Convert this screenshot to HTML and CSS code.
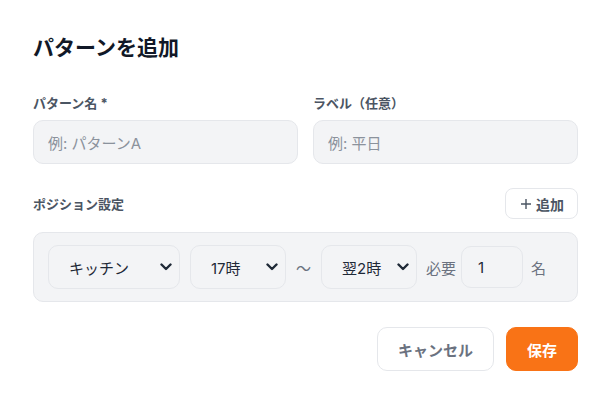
FILE: index.html
```html
<!DOCTYPE html>
<html lang="ja">
<head>
<meta charset="utf-8">
<link rel="stylesheet" href="styles.css">
</head>
<body>
<div class="modal">
  <h1 class="title">パターンを追加</h1>
  <div class="fields">
    <div class="field">
      <label class="label">パターン名 *</label>
      <div class="input">例: パターンA</div>
    </div>
    <div class="field">
      <label class="label">ラベル（任意）</label>
      <div class="input">例: 平日</div>
    </div>
  </div>
  <div class="section-head">
    <span class="label">ポジション設定</span>
    <button class="add-btn"><svg class="plus" width="12" height="12" viewBox="0 0 12 12"><path d="M6 1v10M1 6h10" stroke="currentColor" stroke-width="1.4" fill="none"/></svg>追加</button>
  </div>
  <div class="pos-box">
    <div class="select sel-pos"><span>キッチン</span><svg class="chev" width="12" height="8" viewBox="0 0 12 8"><path d="M1.5 1.5 6 6 10.5 1.5" stroke="currentColor" stroke-width="2.4" fill="none" stroke-linecap="round" stroke-linejoin="round"/></svg></div>
    <div class="select sel-time"><span>17時</span><svg class="chev" width="12" height="8" viewBox="0 0 12 8"><path d="M1.5 1.5 6 6 10.5 1.5" stroke="currentColor" stroke-width="2.4" fill="none" stroke-linecap="round" stroke-linejoin="round"/></svg></div>
    <span class="muted tilde">〜</span>
    <div class="select sel-time"><span>翌2時</span><svg class="chev" width="12" height="8" viewBox="0 0 12 8"><path d="M1.5 1.5 6 6 10.5 1.5" stroke="currentColor" stroke-width="2.4" fill="none" stroke-linecap="round" stroke-linejoin="round"/></svg></div>
    <span class="muted need">必要</span>
    <div class="num">1</div>
    <span class="muted unit">名</span>
  </div>
  <div class="footer">
    <button class="btn cancel">キャンセル</button>
    <button class="btn save">保存</button>
  </div>
</div>
</body>
</html>
```
FILE: styles.css
```css
html, body {
  margin: 0;
  padding: 0;
  background: #ffffff;
}
body {
  font-family: Inter, "Noto Sans CJK JP", sans-serif;
  color: #1f2937;
}
.modal {
  padding: 34px 25px 0 33px;
}
.title {
  margin: 0 0 31px;
  font-size: 21px;
  line-height: 28px;
  font-weight: 700;
  color: #111827;
}
.fields {
  display: grid;
  grid-template-columns: 1fr 1fr;
  column-gap: 15px;
}
.field {
  display: flex;
  flex-direction: column;
}
.label {
  font-size: 13px;
  line-height: 20px;
  font-weight: 700;
  color: #4b5563;
}
.field .label {
  margin-bottom: 7px;
}
.input {
  height: 44px;
  box-sizing: border-box;
  border: 1px solid #e5e7eb;
  border-radius: 10px;
  background: #f3f4f6;
  padding: 0 14px;
  display: flex;
  align-items: center;
  font-size: 15px;
  color: #8b929c;
}
.section-head {
  margin-top: 24px;
  display: flex;
  justify-content: space-between;
  align-items: center;
}
.add-btn {
  height: 31px;
  box-sizing: border-box;
  border: 1px solid #e5e7eb;
  border-radius: 8px;
  background: #ffffff;
  padding: 0 13px 0 14px;
  display: flex;
  align-items: center;
  gap: 4px;
  font-family: inherit;
  font-size: 14px;
  font-weight: 700;
  color: #4b5563;
}
.plus {
  color: #4b5563;
}
.pos-box {
  margin-top: 13px;
  height: 70px;
  box-sizing: border-box;
  border: 1px solid #e5e7eb;
  border-radius: 10px;
  background: #f3f4f6;
  padding: 0 14px;
  display: flex;
  align-items: center;
}
.select {
  height: 44px;
  box-sizing: border-box;
  border: 1px solid #e5e7eb;
  border-radius: 10px;
  background: #f3f4f6;
  display: flex;
  align-items: center;
  justify-content: space-between;
  padding: 0 7px 0 20px;
  font-size: 15px;
  color: #1f2937;
}
.sel-pos {
  width: 132px;
  margin-right: 10px;
}
.sel-time {
  width: 96px;
}
.chev {
  color: #1f2937;
}
.muted {
  font-size: 15px;
  color: #6b7280;
}
.tilde {
  margin: 0 10px;
}
.need {
  margin: 0 5px 0 9px;
}
.num {
  width: 62px;
  height: 42px;
  box-sizing: border-box;
  border: 1px solid #e5e7eb;
  border-radius: 10px;
  background: #f3f4f6;
  display: flex;
  align-items: center;
  padding: 0 16px;
  font-size: 15px;
  color: #1f2937;
}
.unit {
  margin-left: 8px;
}
.footer {
  margin-top: 25px;
  display: flex;
  justify-content: flex-end;
  gap: 12px;
}
.btn {
  height: 44px;
  box-sizing: border-box;
  border-radius: 10px;
  padding: 0 20px;
  font-family: inherit;
  font-size: 15px;
  font-weight: 700;
}
.cancel {
  border: 1px solid #e5e7eb;
  background: #ffffff;
  color: #6b7280;
}
.save {
  border: 1px solid #f97316;
  background: #f97316;
  color: #ffffff;
}
```
